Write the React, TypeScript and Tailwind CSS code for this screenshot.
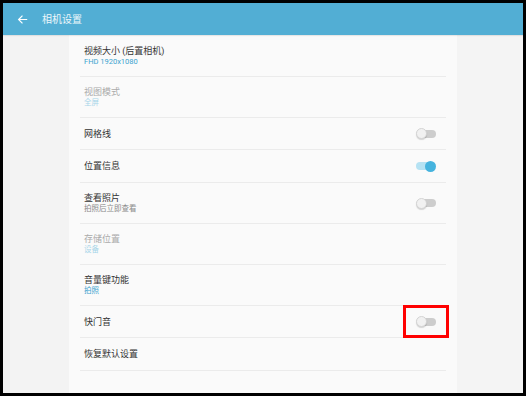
import React from 'react';

interface Row {
  title: string;
  sub?: string;
  disabled?: boolean;
  toggle?: 'on' | 'off';
  highlight?: boolean;
  h: string;
}

const rows: Row[] = [
  { title: '视频大小 (后置相机)', sub: 'FHD 1920x1080', h: 'h-[40px]' },
  { title: '视图模式', sub: '全屏', disabled: true, h: 'h-[40px]' },
  { title: '网格线', toggle: 'off', h: 'h-[31px]' },
  { title: '位置信息', toggle: 'on', h: 'h-[32px]' },
  { title: '查看照片', sub: '拍照后立即查看', toggle: 'off', h: 'h-[40px]' },
  { title: '存储位置', sub: '设备', disabled: true, h: 'h-[40px]' },
  { title: '音量键功能', sub: '拍照', h: 'h-[40px]' },
  { title: '快门音', toggle: 'off', highlight: true, h: 'h-[31px]' },
  { title: '恢复默认设置', h: 'h-[32px]' },
];

function Toggle({ on, highlight }: { on: boolean; highlight?: boolean }) {
  return (
    <div className="relative w-[20px] h-[11px]">
      <div
        className={`absolute top-[1.5px] h-[8px] rounded-full ${
          on ? 'left-0 w-[14px] bg-[#b5e2f3]' : 'left-[3px] w-[17px] bg-[#cdcdcd]'
        }`}
      />
      <div
        className={`absolute top-0 w-[11px] h-[11px] rounded-full ${
          on
            ? 'right-0 bg-[#45b3de]'
            : 'left-0 bg-[#f1f1f1] border border-[#d4d4d4] shadow-[0_1px_1px_rgba(0,0,0,0.15)]'
        }`}
      />
      {highlight && (
        <div className="absolute -left-[13px] -top-[11px] w-[46px] h-[33px] border-[3px] border-[#ff0000]" />
      )}
    </div>
  );
}

export default function App() {
  return (
    <div
      className="w-[526px] h-[396px] bg-black p-[3px] overflow-hidden"
      style={{ fontFamily: 'Roboto, "Noto Sans CJK SC", sans-serif' }}
    >
      <div className="w-full h-full flex flex-col bg-[#f3f3f3]">
        <div className="h-[32px] shrink-0 bg-[#52aed4] flex items-center shadow-[0_1px_1px_rgba(0,0,0,0.08)] z-10">
          <svg className="ml-[14px] w-[11px] h-[11px]" viewBox="0 0 24 24" fill="none" stroke="#ffffff" strokeWidth={2.6} strokeLinecap="square">
            <path d="M21 12H4M11 4.5L3.5 12l7.5 7.5" />
          </svg>
          <span className="ml-[14px] text-[10px] text-white/90">相机设置</span>
        </div>
        <div className="flex flex-1 min-h-0">
          <div className="w-[66px] bg-[#f3f3f3]" />
          <div className="w-[388px] bg-[#fafafa] px-[11px] pt-[1px]">
            {rows.map((r) => (
              <div
                key={r.title}
                className={`${r.h} box-content border-b border-[#ebebeb] flex items-center justify-between pl-[4px] pr-[10px]`}
              >
                <div className="flex flex-col">
                  <span className={`text-[9px] leading-[12px] ${r.disabled ? 'text-[#aaaaaa]' : 'text-[#333333]'}`}>
                    {r.title}
                  </span>
                  {r.sub && (
                    <span
                      className={`text-[7.5px] leading-[10px] ${
                        r.disabled
                          ? 'text-[#a7d5e9]'
                          : r.toggle
                          ? 'text-[#8a8a8a]'
                          : 'text-[#3aa3cf]'
                      }`}
                    >
                      {r.sub}
                    </span>
                  )}
                </div>
                {r.toggle && <Toggle on={r.toggle === 'on'} highlight={r.highlight} />}
              </div>
            ))}
          </div>
          <div className="flex-1 bg-[#f4f4f4]" />
        </div>
      </div>
    </div>
  );
}
